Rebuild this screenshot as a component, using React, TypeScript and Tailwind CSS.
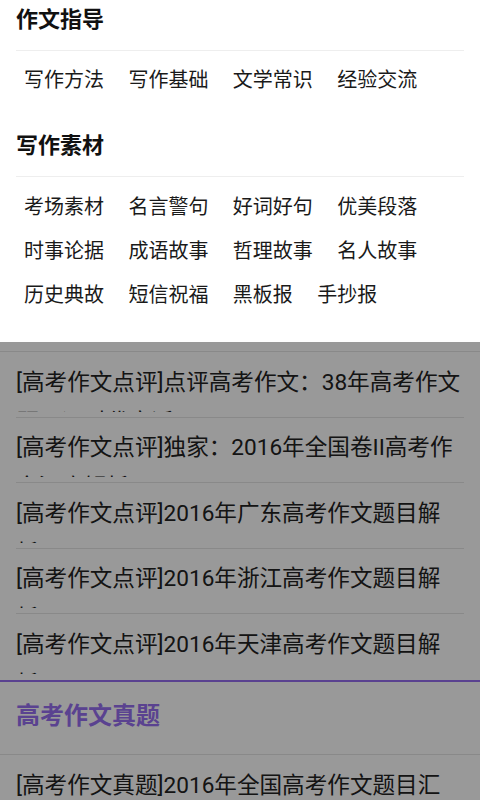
import React from "react";

const guide = ["写作方法", "写作基础", "文学常识", "经验交流"];
const material = [
  ["考场素材", "名言警句", "好词好句", "优美段落"],
  ["时事论据", "成语故事", "哲理故事", "名人故事"],
  ["历史典故", "短信祝福", "黑板报", "手抄报"],
];

const reviews: [string, string][] = [
  ["[高考作文点评]点评高考作文：38年高考作文", "题目评时代变迁"],
  ["[高考作文点评]独家：2016年全国卷II高考作", "文深度解析"],
  ["[高考作文点评]2016年广东高考作文题目解", "析"],
  ["[高考作文点评]2016年浙江高考作文题目解", "析"],
  ["[高考作文点评]2016年天津高考作文题目解", "析"],
];

function Row({ items }: { items: string[] }) {
  return (
    <div className="flex gap-x-[24.4px] pl-2 text-[20px] leading-[44px] text-[#1a1a1a]">
      {items.map((t) => (
        <span key={t} className="whitespace-nowrap">
          {t}
        </span>
      ))}
    </div>
  );
}

function Item({ lines, border }: { lines: [string, string]; border: boolean }) {
  return (
    <div className={`h-[65.5px] pt-[10.5px] ${border ? "border-b border-[#e5e5e5]" : ""}`}>
      <div className="h-[49px] overflow-hidden text-[22.6px] leading-[40px] text-[#222]">
        <div className="whitespace-nowrap">{lines[0]}</div>
        <div className="whitespace-nowrap">{lines[1]}</div>
      </div>
    </div>
  );
}

export default function App() {
  return (
    <div className="w-[480px] h-[800px] overflow-hidden bg-white flex flex-col font-[family-name:Roboto,'Noto_Sans_CJK_SC',sans-serif]">
      {/* Dropdown panel */}
      <div className="h-[342px] shrink-0 bg-white px-4">
        <h2 className="text-[22px] font-bold leading-[40px] pb-[10px] border-b border-[#eeeeee] text-[#111]">
          作文指导
        </h2>
        <div className="pt-[7px]">
          <Row items={guide} />
        </div>
        <h2 className="mt-[24px] text-[22px] font-bold leading-[40px] pb-[10px] border-b border-[#eeeeee] text-[#111]">
          写作素材
        </h2>
        <div className="pt-[8px]">
          {material.map((r, i) => (
            <Row key={i} items={r} />
          ))}
        </div>
      </div>

      {/* Dimmed list beneath */}
      <div className="relative flex-1 overflow-hidden bg-white">
        <div className="h-[10px] border-b border-[#e5e5e5]" />
        <div className="px-4">
          {reviews.map((l, i) => (
            <Item key={i} lines={l} border={i < reviews.length - 1} />
          ))}
        </div>
        <div className="h-[75.5px] border-t-2 border-b border-t-[#966ef0] border-b-[#e5e5e5] flex items-center pb-[3px] px-4">
          <span className="text-[24px] font-bold text-[#966ef0]">高考作文真题</span>
        </div>
        <div className="px-4">
          <Item lines={["[高考作文真题]2016年全国高考作文题目汇", "总"]} border={false} />
        </div>
        <div className="absolute inset-0 bg-black/40" />
      </div>
    </div>
  );
}
